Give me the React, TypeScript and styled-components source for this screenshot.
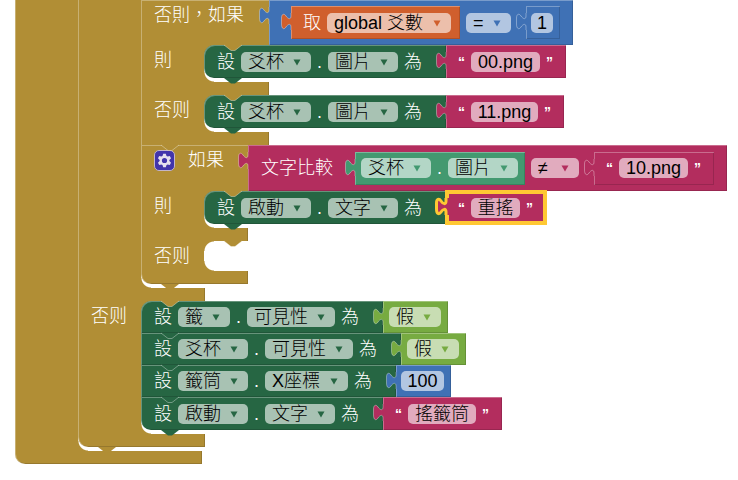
import React, { ReactNode } from "react";
import styled, { createGlobalStyle, css } from "styled-components";

const palette = {
  control: "#b18e35",
  logic: "#77ab41",
  math: "#3f71b5",
  text: "#b32d5e",
  variable: "#d05f2d",
  setter: "#266643",
  getter: "#439970",
};

const GlobalStyle = createGlobalStyle`
  *, *::before, *::after { box-sizing: border-box; }
  body { margin: 0; background: #fff; }
  body, select, input, button {
    font-family: "Liberation Sans", "Noto Sans CJK TC", sans-serif;
    font-size: 18px;
    font-weight: 300;
    line-height: 20px;
  }
`;

const Workspace = styled.main`
  display: flex;
  align-items: flex-start;
  padding: 0 0 16px 15px;
  overflow: hidden;
`;

const bevel = css`
  box-shadow: inset 1px 1px 0 rgba(255, 255, 255, 0.3), inset -1px -1px 0 rgba(0, 0, 0, 0.15);
`;

/* ---------- fields ---------- */

const Word = styled.span`
  flex: none;
  color: #fff;
  white-space: nowrap;
`;

const Quote = styled(Word)`
  width: 7px;
  font-weight: 700;
  font-size: 14px;
`;

const Picker = styled.span`
  position: relative;
  display: flex;
  flex: none;
`;

const Select = styled.select<{ $min?: number }>`
  appearance: none;
  height: 20px;
  min-width: ${(p) => p.$min ?? 0}px;
  margin: 0;
  padding: 0 27px 0 7px;
  border: 0;
  border-radius: 5px;
  background: rgba(255, 255, 255, 0.6);
  color: #000;
`;

const Caret = styled.svg`
  position: absolute;
  top: 7px;
  right: 10px;
  width: 8px;
  height: 7px;
  pointer-events: none;
`;

const TextBox = styled.input<{ $width: number }>`
  flex: none;
  width: ${(p) => p.$width}px;
  height: 20px;
  margin: 0;
  padding: 0;
  border: 0;
  border-radius: 5px;
  background: rgba(255, 255, 255, 0.6);
  color: #000;
  text-align: center;
`;

function Dropdown({ value, label, color, min }: { value: string; label: string; color: string; min?: number }) {
  return (
    <Picker>
      <Select aria-label={label} defaultValue={value} $min={min}>
        <option value={value}>{value}</option>
      </Select>
      <Caret viewBox="0 0 8 7" aria-hidden="true">
        <path d="M0.5 0.5H7.5L4 6.5Z" fill={color} />
      </Caret>
    </Picker>
  );
}

/* ---------- connectors ---------- */

const TabShape = styled.svg`
  position: absolute;
  left: -12px;
  top: 5px;
  width: 16px;
  height: 22px;
  overflow: visible;
`;

const NotchShape = styled.svg<{ $bottom?: boolean }>`
  position: absolute;
  left: 19px;
  ${(p) => (p.$bottom ? "top: 100%;" : "top: 0;")}
  width: 20px;
  height: 6px;
  overflow: visible;
`;

function Tab({ color, selected }: { color: string; selected?: boolean }) {
  const curve = "V5C12 9 9 8 7 5C5 2 2.5 3 2.5 7V13C2.5 18 5 19 7 16C9 13 12 12 12 16V19";
  return (
    <TabShape viewBox="0 0 16 22" aria-hidden="true">
      <path d={`M16 2H12${curve}H16Z`} fill={color} />
      <path
        d={`M12 2${curve}`}
        fill="none"
        stroke={selected ? "#ffc833" : "rgba(255,255,255,0.35)"}
        strokeWidth={selected ? 3 : 1}
      />
    </TabShape>
  );
}

function Notch({ color, bottom }: { color: string; bottom?: boolean }) {
  return (
    <NotchShape $bottom={bottom} viewBox="0 0 20 6" aria-hidden="true">
      <path d="M1 0L8 5.5H12L19 0Z" fill={color} />
      {!bottom && <path d="M1 0L8 5.5H12L19 0" fill="none" stroke="rgba(255,255,255,0.35)" />}
    </NotchShape>
  );
}

/* ---------- value blocks ---------- */

const ValueBody = styled.div<{ $color: string; $left: number; $right: number; $tall?: boolean; $selected?: boolean }>`
  position: relative;
  display: flex;
  flex: none;
  align-items: center;
  align-self: ${(p) => (p.$tall ? "stretch" : "auto")};
  gap: 6px;
  height: ${(p) => (p.$tall ? "auto" : "33px")};
  padding: 0 ${(p) => p.$right}px 0 ${(p) => p.$left}px;
  background: ${(p) => p.$color};
  ${bevel}
  ${(p) =>
    p.$selected &&
    css`
      z-index: 1;
      box-shadow: 0 0 0 1px #ffc833, inset 0 0 0 3px #ffc833;
    `}
`;

/* A nested value sits after its neighbour with room for the puzzle tab. */
const Socket = styled.div<{ $space: number }>`
  display: flex;
  flex: none;
  align-self: stretch;
  align-items: center;
  margin-left: ${(p) => p.$space}px;
`;

type ValueProps = {
  color: string;
  left?: number;
  right?: number;
  tall?: boolean;
  selected?: boolean;
  children: ReactNode;
};

function Value({ color, left = 6, right = 8, tall, selected, children }: ValueProps) {
  return (
    <ValueBody $color={color} $left={left} $right={right} $tall={tall} $selected={selected}>
      <Tab color={color} selected={selected} />
      {children}
    </ValueBody>
  );
}

function TextValue({ value, width, selected, tall = true }: { value: string; width: number; selected?: boolean; tall?: boolean }) {
  return (
    <Value color={palette.text} left={12} right={13} tall={tall} selected={selected}>
      <Quote>“</Quote>
      <TextBox aria-label="文字" defaultValue={value} $width={width} />
      <Quote>”</Quote>
    </Value>
  );
}

function NumberValue({ value, width, tall }: { value: string; width: number; tall?: boolean }) {
  return (
    <Value color={palette.math} tall={tall} left={5} right={7}>
      <TextBox aria-label="數字" defaultValue={value} $width={width} />
    </Value>
  );
}

function FalseValue() {
  return (
    <Value color={palette.logic} tall right={7}>
      <Dropdown label="邏輯值" value="假" color={palette.logic} />
    </Value>
  );
}

/* ---------- setter statements ---------- */

const Statement = styled.div<{ $last?: boolean }>`
  position: relative;
  display: flex;
  width: max-content;
  height: ${(p) => (p.$last ? 33 : 32)}px;
`;

const SetterBody = styled.div<{ $first?: boolean; $last?: boolean }>`
  display: flex;
  align-items: center;
  gap: 6px;
  padding: 0 24px 0 13px;
  background: ${palette.setter};
  border-radius: ${(p) => (p.$first ? 10 : 0)}px 0 0 ${(p) => (p.$last ? 10 : 0)}px;
  ${bevel}
`;

type SetterProps = { component: string; property: string; first?: boolean; last?: boolean; children: ReactNode };

function Setter({ component, property, first, last, children }: SetterProps) {
  return (
    <Statement $last={last}>
      <SetterBody $first={first} $last={last}>
        <Word>設</Word>
        <Dropdown label="元件" value={component} color={palette.setter} />
        <Word>.</Word>
        <Dropdown label="屬性" value={property} color={palette.setter} />
        <Word>為</Word>
      </SetterBody>
      {children}
      <Notch color={first ? palette.control : palette.setter} />
      {last && <Notch color={palette.setter} bottom />}
    </Statement>
  );
}

/* ---------- control blocks ---------- */

const Control = styled.section`
  position: relative;
  display: flex;
  flex-direction: column;
`;

const Header = styled.div<{ $height: number }>`
  display: flex;
  height: ${(p) => p.$height}px;
`;

const HeaderLabel = styled.div<{ $width: number }>`
  display: flex;
  flex: none;
  align-items: flex-start;
  gap: 13px;
  width: ${(p) => p.$width}px;
  padding: 5px 0 0 13px;
  background: ${palette.control};
  box-shadow: inset 1px 1px 0 rgba(255, 255, 255, 0.3);
`;

const Branch = styled.div`
  display: flex;
`;

const Arm = styled.div`
  flex: none;
  width: 63px;
  padding: 5px 0 0 13px;
  background: ${palette.control};
  box-shadow: inset 1px 0 0 rgba(255, 255, 255, 0.3);
`;

const Mouth = styled.div`
  flex: 1;
  min-height: 30px;
  position: relative;
  background:
    radial-gradient(circle at 100% 100%, transparent 9px, ${palette.control} 10px) top left / 10px 10px no-repeat,
    radial-gradient(circle at 100% 0, transparent 9px, ${palette.control} 10px) bottom left / 10px 10px no-repeat;
`;

const Stack = styled.div`
  display: flex;
  flex-direction: column;
  padding-bottom: 4px;
`;

const Bar = styled.div<{ $width: number; $end?: boolean }>`
  width: ${(p) => p.$width}px;
  height: 13px;
  background: ${palette.control};
  border-bottom-left-radius: ${(p) => (p.$end ? 10 : 0)}px;
  box-shadow: ${(p) =>
    p.$end
      ? "inset 1px 0 0 rgba(255, 255, 255, 0.3), inset -1px -1px 0 rgba(0, 0, 0, 0.15)"
      : "inset 1px 0 0 rgba(255, 255, 255, 0.3), inset -1px 0 0 rgba(0, 0, 0, 0.15)"};
`;

const GearButton = styled.button`
  display: flex;
  align-items: center;
  justify-content: center;
  flex: none;
  width: 21px;
  height: 21px;
  padding: 0;
  border: 1px solid #c3b5c9;
  border-radius: 5px;
  background: #4234ab;
`;

function Gear() {
  const teeth = [0, 60, 120, 180, 240, 300];
  return (
    <GearButton aria-label="設定">
      <svg width="15" height="15" viewBox="-7.5 -7.5 15 15" aria-hidden="true">
        {teeth.map((a) => (
          <path key={a} d="M-2.3 -3.5L-1.3 -6.8H1.3L2.3 -3.5Z" fill="#e6e0ee" transform={`rotate(${a})`} />
        ))}
        <circle r="3.7" fill="none" stroke="#e6e0ee" strokeWidth="2.2" />
      </svg>
    </GearButton>
  );
}

function Section({ label, width, end, children }: { label?: string; width: number; end?: boolean; children?: ReactNode }) {
  return (
    <>
      <Branch>
        <Arm>{label && <Word>{label}</Word>}</Arm>
        <Mouth>{children ? <Stack>{children}</Stack> : <Notch color={palette.control} />}</Mouth>
      </Branch>
      <Bar $width={width} $end={end} />
    </>
  );
}

function ElseIfBlock() {
  return (
    <Control>
      <Header $height={45}>
        <HeaderLabel $width={128}>
          <Word>否則，如果</Word>
        </HeaderLabel>
        <Value color={palette.math} left={22} right={13} tall>
          <Value color={palette.variable} left={12} right={9}>
            <Word>取</Word>
            <Dropdown label="變數" value="global 爻數" color={palette.variable} />
          </Value>
          <Dropdown label="比較" value="=" color={palette.math} />
          <Socket $space={9}>
            <NumberValue value="1" width={22} />
          </Socket>
        </Value>
      </Header>
      <Section label="則" width={128}>
        <Setter component="爻杯" property="圖片" first last>
          <TextValue value="00.png" width={69} />
        </Setter>
      </Section>
      <Section label="否则" width={128}>
        <Setter component="爻杯" property="圖片" first last>
          <TextValue value="11.png" width={67} />
        </Setter>
      </Section>
    </Control>
  );
}

function IfBlock() {
  return (
    <Control>
      <Header $height={46}>
        <HeaderLabel $width={107}>
          <Gear />
          <Word>如果</Word>
        </HeaderLabel>
        <Value color={palette.text} left={13} right={13} tall>
          <Word>文字比較</Word>
          <Socket $space={16}>
            <Value color={palette.getter} right={7}>
              <Dropdown label="元件" value="爻杯" color={palette.getter} />
              <Word>.</Word>
              <Dropdown label="屬性" value="圖片" color={palette.getter} />
            </Value>
          </Socket>
          <Dropdown label="比較" value="≠" color={palette.text} min={48} />
          <Socket $space={9}>
            <TextValue value="10.png" width={69} tall={false} />
          </Socket>
        </Value>
      </Header>
      <Section label="則" width={107}>
        <Setter component="啟動" property="文字" first last>
          <TextValue value="重搖" width={49} selected />
        </Setter>
      </Section>
      <Section label="否则" width={107} end />
      <Notch color={palette.control} />
      <Notch color={palette.control} bottom />
    </Control>
  );
}

export default function App() {
  return (
    <>
      <GlobalStyle />
      <Workspace>
        <Control>
          <Section width={187} end>
            <Control>
              <Section width={127}>
                <ElseIfBlock />
                <IfBlock />
              </Section>
              <Section label="否则" width={127} end>
                <Setter component="籤" property="可見性" first>
                  <FalseValue />
                </Setter>
                <Setter component="爻杯" property="可見性">
                  <FalseValue />
                </Setter>
                <Setter component="籤筒" property="X座標">
                  <NumberValue value="100" width={43} tall />
                </Setter>
                <Setter component="啟動" property="文字" last>
                  <TextValue value="搖籤筒" width={68} />
                </Setter>
              </Section>
              <Notch color={palette.control} bottom />
            </Control>
          </Section>
        </Control>
      </Workspace>
    </>
  );
}
